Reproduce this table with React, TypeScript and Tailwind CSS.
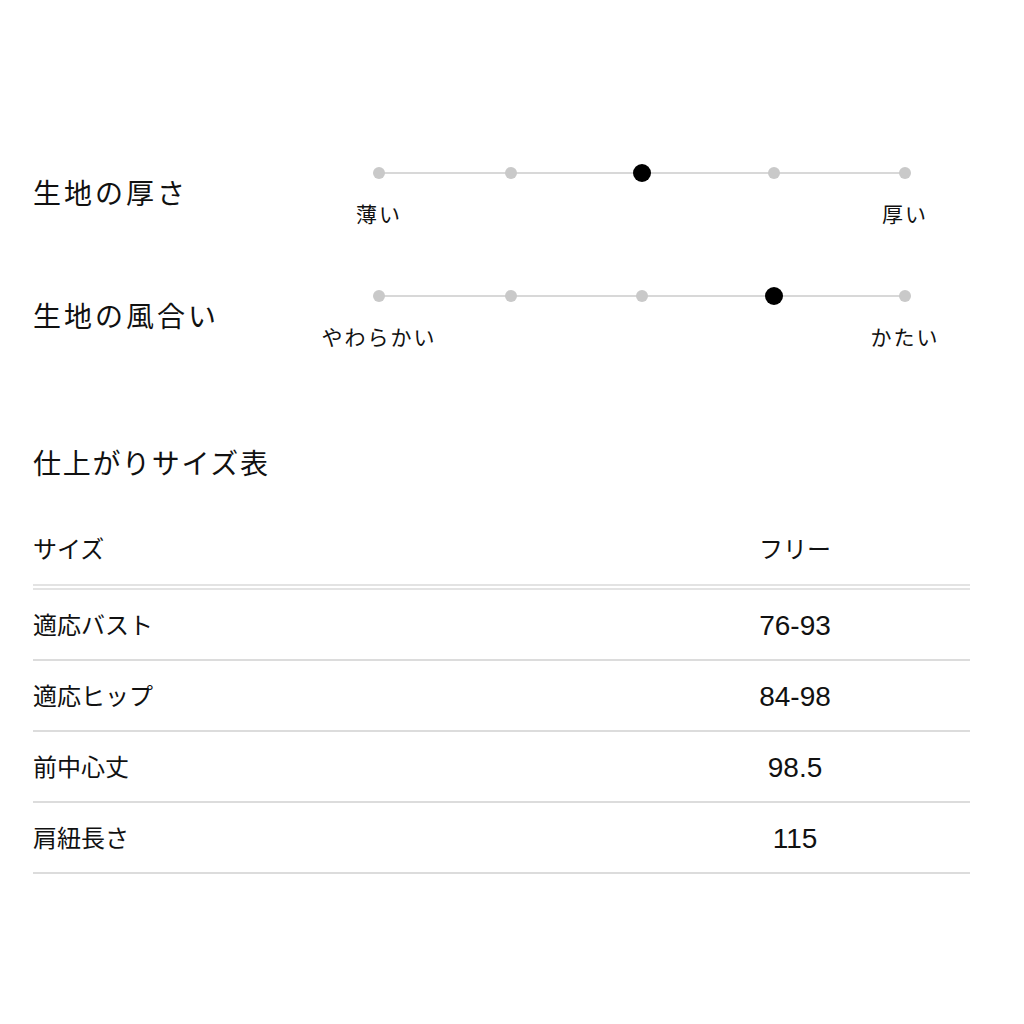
import * as React from "react";

const FONT = { fontFamily: '"Liberation Sans", "Noto Sans CJK JP", sans-serif' };

type Scale = { title: string; left: string; right: string; value: number };

const scales: Scale[] = [
  { title: "生地の厚さ", left: "薄い", right: "厚い", value: 2 },
  { title: "生地の風合い", left: "やわらかい", right: "かたい", value: 3 },
];

const rows: [string, string][] = [
  ["適応バスト", "76-93"],
  ["適応ヒップ", "84-98"],
  ["前中心丈", "98.5"],
  ["肩紐長さ", "115"],
];

function ScaleRow({ scale }: { scale: Scale }) {
  return (
    <div className="flex items-start">
      <div className="mt-[13px] w-[337px] text-[28px] leading-[36px] tracking-[3px] text-[#111]">
        {scale.title}
      </div>
      <div className="w-[544px]">
        <div className="relative flex h-[18px] items-center justify-between">
          <div className="absolute left-[9px] right-[9px] top-[8px] h-[2px] bg-[#d8d8d8]" />
          {[0, 1, 2, 3, 4].map((i) => (
            <div key={i} className="relative flex w-[18px] justify-center">
              {i === scale.value ? (
                <span className="block h-[18px] w-[18px] rounded-full bg-black" />
              ) : (
                <span className="block h-[12px] w-[12px] rounded-full bg-[#c9c9c9]" />
              )}
            </div>
          ))}
        </div>
        <div className="mt-[18px] flex justify-between text-[21px] leading-[30px] tracking-[2px] text-[#111]">
          <div className="flex w-[18px] justify-center whitespace-nowrap">{scale.left}</div>
          <div className="flex w-[18px] justify-center whitespace-nowrap">{scale.right}</div>
        </div>
      </div>
    </div>
  );
}

export default function App() {
  return (
    <div className="h-[1024px] w-[1024px] bg-white" style={FONT}>
      <div className="ml-[33px] w-[937px] pt-[164px]">
        <div className="flex flex-col gap-[57px]">
          {scales.map((s) => (
            <ScaleRow key={s.title} scale={s} />
          ))}
        </div>

        <h2 className="mt-[92px] text-[28px] leading-[40px] tracking-[1.7px] text-[#111]">
          仕上がりサイズ表
        </h2>

        <div className="mt-[29px]">
          <div className="flex h-[76px] items-center border-b-[6px] border-double border-[#e3e3e3] pt-[1px] text-[24px] text-[#111]">
            <div className="flex-1">サイズ</div>
            <div className="w-[350px] text-center">フリー</div>
          </div>
          {rows.map(([label, value]) => (
            <div
              key={label}
              className="flex h-[71px] items-center border-b-2 border-[#dcdcdc] pt-[3px] text-[#111]"
            >
              <div className="flex-1 text-[24px]">{label}</div>
              <div className="w-[350px] text-center text-[28px]">{value}</div>
            </div>
          ))}
        </div>
      </div>
    </div>
  );
}
